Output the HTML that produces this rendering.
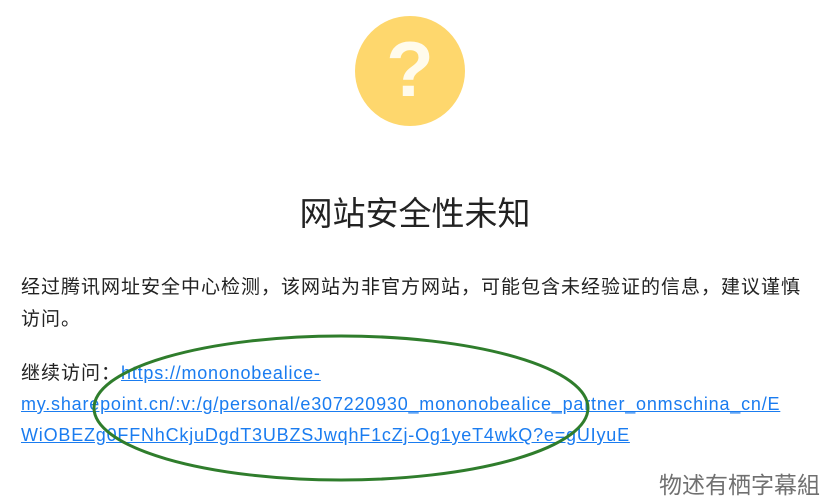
<!DOCTYPE html>
<html><head><meta charset="utf-8"><style>
html,body{margin:0;padding:0;background:#fff;width:830px;height:503px;overflow:hidden;position:relative;font-family:"Liberation Sans","Noto Sans CJK SC",sans-serif;}
.circle{position:absolute;left:355px;top:16px;width:110px;height:110px;border-radius:50%;background:#fed76d;}
.q{position:absolute;left:0;top:-2px;width:110px;height:110px;text-align:center;line-height:110px;font-size:78px;font-weight:bold;color:#fffbec;font-family:"Liberation Sans",sans-serif;}
.title{position:absolute;left:0;width:830px;top:187px;text-align:center;font-size:33px;color:#222;}
.p{position:absolute;left:21px;top:272px;width:800px;font-size:19px;letter-spacing:1px;line-height:32px;color:#222;}
.l{position:absolute;left:21px;top:358px;width:800px;font-size:18px;line-height:31px;color:#222;word-break:break-all;}
.lab{font-size:19px;letter-spacing:1px;}
a{color:#1a7cf0;text-decoration:underline;letter-spacing:0.8px;}
.wm{position:absolute;right:10px;top:466px;font-size:23px;color:#707070;}
svg{position:absolute;left:0;top:0;}
</style></head><body>
<div class="circle"><div class="q">?</div></div>
<div class="title">网站安全性未知</div>
<div class="p">经过腾讯网址安全中心检测，该网站为非官方网站，可能包含未经验证的信息，建议谨慎<br>访问。</div>
<div class="l"><span class="lab">继续访问：</span><a>https://mononobealice-<br>my.sharepoint.cn/:v:/g/personal/e307220930_mononobealice_partner_onmschina_cn/E<br>WiOBEZg0FFNhCkjuDgdT3UBZSJwqhF1cZj-Og1yeT4wkQ?e=gUIyuE</a></div>
<svg width="830" height="503"><ellipse cx="341" cy="408" rx="247" ry="72" fill="none" stroke="#2f7d2c" stroke-width="3"/></svg>
<div class="wm">物述有栖字幕組</div>
</body></html>
